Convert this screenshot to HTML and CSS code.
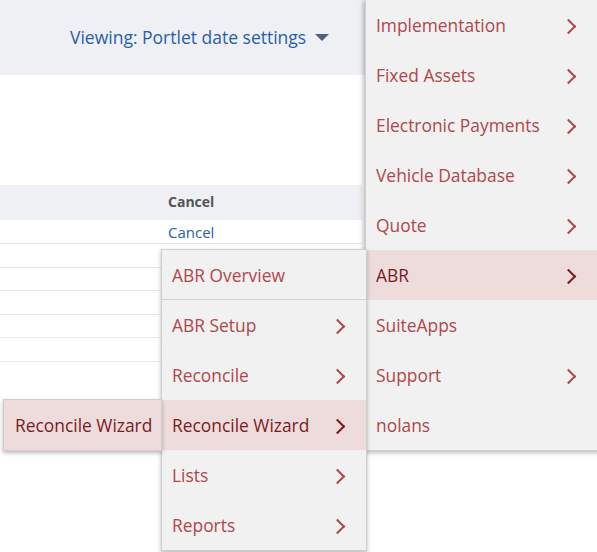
FILE: index.html
```html
<!DOCTYPE html>
<html lang="en">
<head>
  <meta charset="UTF-8">
  <title>Portlet date settings</title>
  <link rel="stylesheet" href="styles.css">
</head>
<body>
  <div class="page">

    <!-- header band -->
    <div class="topbar">
      <span class="viewing">Viewing: Portlet date settings</span>
      <svg class="caret" width="14" height="8" viewBox="0 0 14 8"><path d="M0 0h14L7 7z" fill="#4d6082"/></svg>
    </div>

    <div class="blank"></div>

    <!-- list table -->
    <table class="grid">
      <tr class="head"><th></th><th>Cancel</th></tr>
      <tr><td></td><td><a href="#">Cancel</a></td></tr>
      <tr><td></td><td></td></tr>
      <tr><td></td><td></td></tr>
      <tr><td></td><td></td></tr>
      <tr><td></td><td></td></tr>
      <tr><td></td><td></td></tr>
    </table>

    <!-- top level menu -->
    <ul class="menu menu-main">
      <li class="sub">Implementation</li>
      <li class="sub">Fixed Assets</li>
      <li class="sub">Electronic Payments</li>
      <li class="sub">Vehicle Database</li>
      <li class="sub">Quote</li>
      <li class="sub on">ABR</li>
      <li>SuiteApps</li>
      <li class="sub">Support</li>
      <li>nolans</li>
    </ul>

    <!-- ABR submenu -->
    <ul class="menu menu-abr">
      <li class="first">ABR Overview</li>
      <li class="sub">ABR Setup</li>
      <li class="sub">Reconcile</li>
      <li class="sub on">Reconcile Wizard</li>
      <li class="sub">Lists</li>
      <li class="sub">Reports</li>
    </ul>

    <!-- Reconcile Wizard flyout -->
    <ul class="menu menu-wiz">
      <li class="on">Reconcile Wizard</li>
    </ul>

  </div>
</body>
</html>
```

FILE: styles.css
```css
* { margin:0; padding:0; box-sizing:border-box; }
body { background:#fff; font-family:"Open Sans", "Liberation Sans", sans-serif; }

.page {
  position:relative;
  width:597px; height:552px;
  overflow:hidden;
}

/* header */
.topbar {
  height:75px;
  background:#eef0f3;
  display:flex; align-items:center;
  padding-left:70px;
  padding-bottom:2px;
}
.viewing { color:#2a5ea8; font-size:17.5px; }
.caret { margin-left:9px; margin-top:2px; }

.blank { height:110px; }

/* table */
.grid { width:362px; border-collapse:collapse; font-size:15px; }
.grid th, .grid td { text-align:left; padding:0; }
.grid th:first-child, .grid td:first-child { width:168px; }
.grid .head { background:#eef0f3; height:35px; }
.grid .head th { color:#555; font-weight:700; font-size:14px; padding-bottom:2px; }
.grid td { height:23.6px; border-bottom:1px solid #e8e8e8; }
.grid a { color:#2a5ea8; text-decoration:none; }

/* menus */
.menu {
  position:absolute;
  list-style:none;
  background:#f1f1f1;
  border:1px solid #cfcfcf;
  box-shadow:0 2px 4px rgba(0,0,0,0.28);
}
.menu li {
  position:relative;
  height:50px;
  display:flex; align-items:center;
  padding-left:10px;
  font-size:17.4px;
  color:#b0474b;
}
.menu li.sub::after {
  content:"";
  position:absolute;
  top:20.5px;
  width:9px; height:9px;
  border-top:2.5px solid currentColor;
  border-right:2.5px solid currentColor;
  transform:rotate(45deg);
}
.menu li.on { background:#eedcdd; color:#7b1b1e; }

.menu-main {
  left:365px; top:-1px;
  width:240px;
  box-shadow:-2px 2px 4px rgba(0,0,0,0.25);
}
.menu-main li.sub::after { left:197px; }

.menu-abr {
  left:161px; top:249px;
  width:206px;
}
.menu-abr li.first { border-bottom:1px solid #d9cfcf; }
.menu-abr li.sub::after { left:170px; }

.menu-wiz {
  left:3px; top:399px;
  width:159px;
}
.menu-wiz li { padding-left:11px; }
```
